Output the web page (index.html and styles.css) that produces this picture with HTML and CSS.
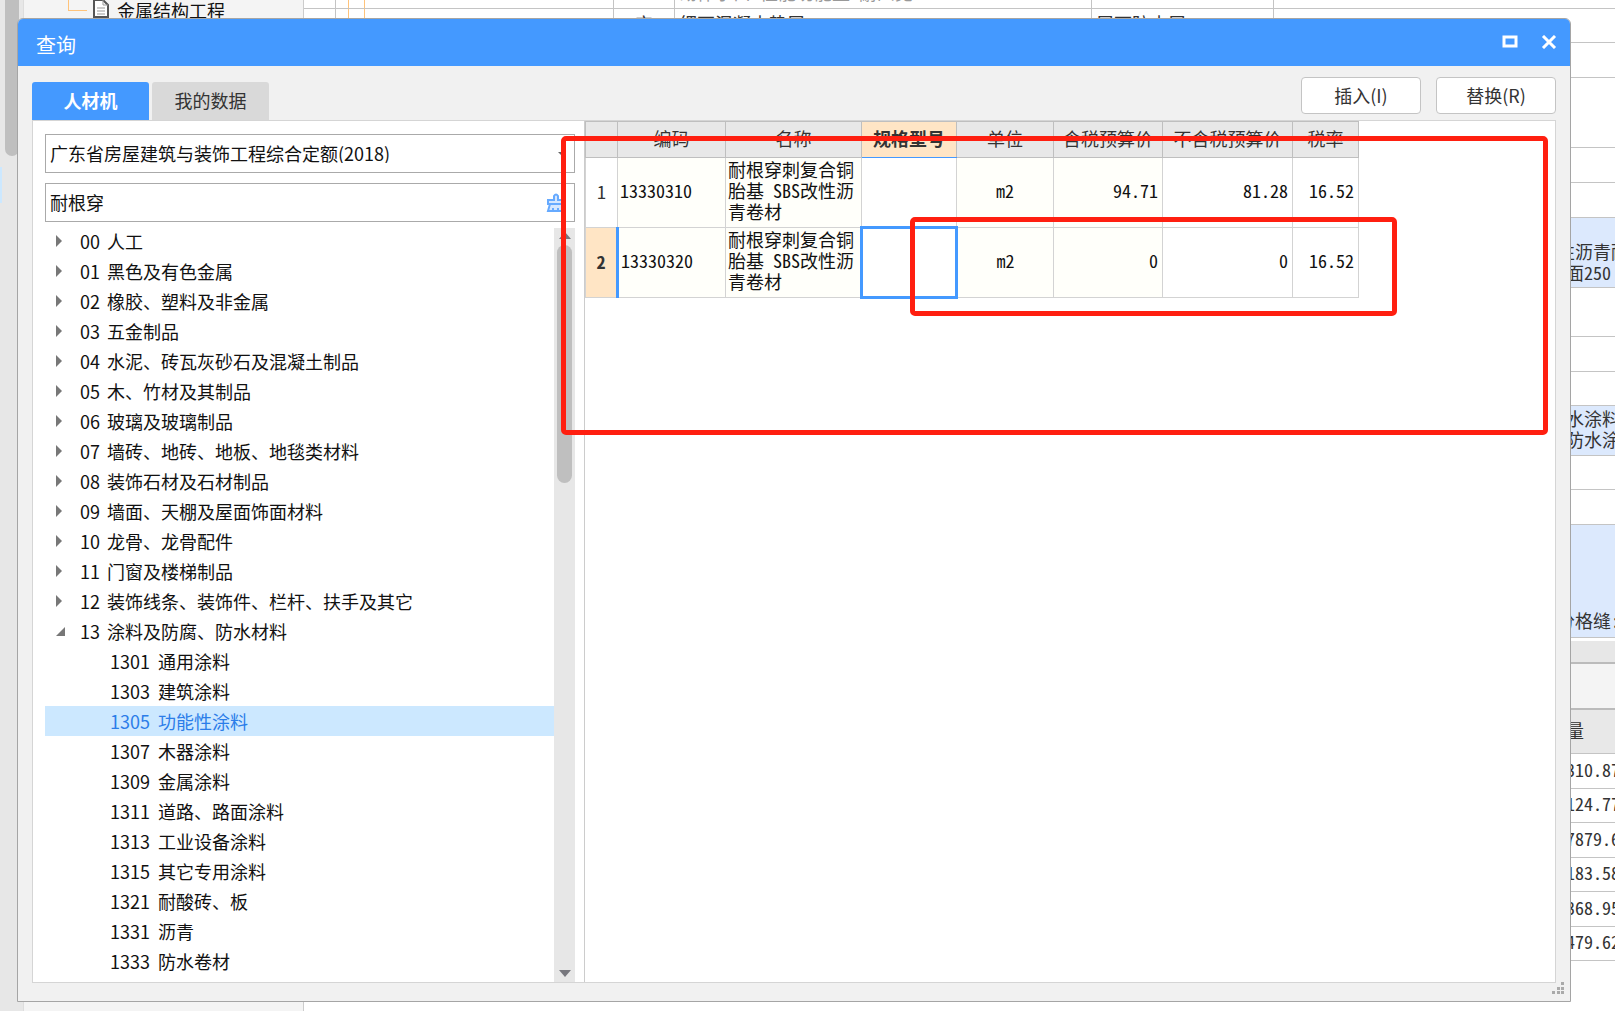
FILE: index.html
```html
<!DOCTYPE html>
<html lang="zh-CN">
<head>
<meta charset="utf-8">
<title>查询</title>
<link rel="stylesheet" href="styles.css">
</head>
<body>
<div class="app">
  <div class="rail"><div class="rail-track"><div class="rail-thumb"></div></div><div class="rail-mark"></div></div>
  <nav class="project">
    <span class="branch"></span>
    <svg class="file-icon" width="16" height="20" viewBox="0 0 16 20"><path d="M1 0V17H15V5L10 0Z" fill="#fff" stroke="#555" stroke-width="2"/><path d="M10 0V5H15M4 8H12M4 11H12M4 14H12" fill="none" stroke="#999"/></svg>
    <span>金属结构工程</span>
  </nav>
  <main class="sheet">
    <div class="row h9 top"><i></i><i class="or"></i><i class="or"></i><i></i><i></i><i class="muted">砌体小口 性能功能型 耐四见.</i><i></i><i class="last"></i></div>
    <div class="row h34 second"><i></i><i class="or"></i><i class="or"></i><i></i><i class="mid">定</i><i>细石混凝土垫层</i><i>屋面防水层</i><i class="last"></i></div>
    <div class="row h35"></div>
    <div class="row h70"></div>
    <div class="row h35"></div>
    <div class="row h35"></div>
    <div class="row h70 picked"><p>S性沥青耐<br>屋面250</p></div>
    <div class="row h49"></div>
    <div class="row h35"></div>
    <div class="row h34"></div>
    <div class="row h50 picked"><p>防水涂料<br>型防水涂</p></div>
    <div class="row h34"></div>
    <div class="row h35"></div>
    <div class="row h113 picked"><p>1分格缝:</p></div>
    <div class="bar"></div>
    <div class="tools"></div>
    <div class="row h44 head"><p>数量</p></div>
    <div class="row h35"><p class="amount">310.87</p></div>
    <div class="row h34"><p class="amount">124.77</p></div>
    <div class="row h35"><p class="amount">7879.62</p></div>
    <div class="row h34"><p class="amount">183.58</p></div>
    <div class="row h35"><p class="amount">368.95</p></div>
    <div class="row h34"><p class="amount">479.62</p></div>
  </main>
</div>

<section class="dialog" role="dialog" aria-labelledby="dialog-title">
  <header class="titlebar">
    <h1 id="dialog-title">查询</h1>
    <button class="win-btn" aria-label="最大化"><svg width="16" height="14" viewBox="0 0 16 14"><rect x="2" y="2" width="12" height="9" fill="none" stroke="#fff" stroke-width="3"/></svg></button>
    <button class="win-btn" aria-label="关闭"><svg width="16" height="14" viewBox="0 0 16 14"><path d="M2 1L14 13M14 1L2 13" stroke="#fff" stroke-width="3"/></svg></button>
  </header>
  <div class="toolbar">
    <div class="tabs">
      <button class="tab active">人材机</button>
      <button class="tab">我的数据</button>
    </div>
    <div class="actions">
      <button class="action">插入(I)</button>
      <button class="action">替换(R)</button>
    </div>
  </div>
  <div class="panel">
    <aside class="side">
      <div class="field">
        <select aria-label="定额库"><option>广东省房屋建筑与装饰工程综合定额(2018)</option></select>
        <svg width="8" height="4" viewBox="0 0 8 4"><path d="M0 0H8L4 4Z" fill="#666"/></svg>
      </div>
      <div class="field">
        <input type="text" value="耐根穿" aria-label="搜索">
        <svg width="20" height="20" viewBox="0 0 20 20" fill="#d5e7ff" stroke="#66aaff" stroke-width="2"><path d="M8 7V3Q10 0 12 3V7H17V11H2V7ZM4 11L2 18H17L16 11M7 18V15M12 18V15"/></svg>
      </div>
      <div class="tree-area">
        <ul class="tree">
          <li><b></b><span>00</span>人工</li>
          <li><b></b><span>01</span>黑色及有色金属</li>
          <li><b></b><span>02</span>橡胶、塑料及非金属</li>
          <li><b></b><span>03</span>五金制品</li>
          <li><b></b><span>04</span>水泥、砖瓦灰砂石及混凝土制品</li>
          <li><b></b><span>05</span>木、竹材及其制品</li>
          <li><b></b><span>06</span>玻璃及玻璃制品</li>
          <li><b></b><span>07</span>墙砖、地砖、地板、地毯类材料</li>
          <li><b></b><span>08</span>装饰石材及石材制品</li>
          <li><b></b><span>09</span>墙面、天棚及屋面饰面材料</li>
          <li><b></b><span>10</span>龙骨、龙骨配件</li>
          <li><b></b><span>11</span>门窗及楼梯制品</li>
          <li><b></b><span>12</span>装饰线条、装饰件、栏杆、扶手及其它</li>
          <li><b class="open"></b><span>13</span>涂料及防腐、防水材料</li>
          <li class="sub"><span>1301</span>通用涂料</li>
          <li class="sub"><span>1303</span>建筑涂料</li>
          <li class="sub selected"><span>1305</span>功能性涂料</li>
          <li class="sub"><span>1307</span>木器涂料</li>
          <li class="sub"><span>1309</span>金属涂料</li>
          <li class="sub"><span>1311</span>道路、路面涂料</li>
          <li class="sub"><span>1313</span>工业设备涂料</li>
          <li class="sub"><span>1315</span>其它专用涂料</li>
          <li class="sub"><span>1321</span>耐酸砖、板</li>
          <li class="sub"><span>1331</span>沥青</li>
          <li class="sub"><span>1333</span>防水卷材</li>
        </ul>
        <div class="scroll">
          <svg width="12" height="7" viewBox="0 0 12 7"><path d="M0 7L6 0L12 7Z" fill="#77777d"/></svg>
          <div class="scroll-thumb"></div>
          <svg width="12" height="7" viewBox="0 0 12 7"><path d="M0 0H12L6 7Z" fill="#77777d"/></svg>
        </div>
      </div>
    </aside>
    <div class="result">
      <table>
        <colgroup><col class="c-no"><col class="c-code"><col class="c-name"><col class="c-spec"><col class="c-unit"><col class="c-tax"><col class="c-net"><col class="c-rate"></colgroup>
        <thead><tr><th></th><th>编码</th><th>名称</th><th class="current">规格型号</th><th>单位</th><th>含税预算价</th><th>不含税预算价</th><th>税率</th></tr></thead>
        <tbody>
          <tr><th>1</th><td class="tint">13330310</td><td class="tint">耐根穿刺复合铜胎基 SBS改性沥青卷材</td><td></td><td class="tint unit">m2</td><td class="tint num">94.71</td><td class="num">81.28</td><td class="num">16.52</td></tr>
          <tr><th class="current">2</th><td class="tint">13330320</td><td class="tint">耐根穿刺复合铜胎基 SBS改性沥青卷材</td><td class="focus"></td><td class="tint unit">m2</td><td class="tint num">0</td><td class="num">0</td><td class="num">16.52</td></tr>
        </tbody>
      </table>
    </div>
  </div>
  <svg class="grip" width="13" height="13" viewBox="0 0 13 13" fill="#aaa"><path d="M9 0h3v3h-3zM5 5h3v3h-3zM9 5h3v3h-3zM0 9h3v3h-3zM5 9h3v3h-3zM9 9h3v3h-3z"/></svg>
</section>
<div class="callout outer"></div>
<div class="callout inner"></div>
</body>
</html>
```

FILE: styles.css
```css
* { box-sizing: border-box; }
body {
  margin: 0;
  height: 100vh;
  overflow: hidden;
  position: relative;
  background: #fff;
  color: #111;
  font: 18px/20px "Noto Sans CJK SC", sans-serif;
}
button, input, select { font: inherit; color: inherit; }

/* application behind the dialog */
.app { display: flex; height: 100%; }
.rail { width: 24px; flex: none; background: #e7e7e7; border-right: 1px solid #ddd; }
.rail-track { padding-left: 5px; }
.rail-thumb { width: 14px; height: 156px; background: #bfbfbf; border-radius: 0 0 7px 7px; }
.rail-mark { width: 2px; height: 36px; margin-top: 11px; background: #cce8ff; }
.project {
  width: 280px;
  flex: none;
  display: flex;
  align-items: flex-start;
  background: #f4f4f4;
  border-right: 1px solid #ccc;
  padding-left: 44px;
}
.branch { width: 19px; height: 11px; margin-right: 6px; border-bottom: 1px solid #ffc37a; border-left: 1px solid #ffc37a; }
.file-icon { margin-right: 8px; }
.sheet { flex: 1; min-width: 0; font-family: "Noto Sans Mono CJK SC", "Noto Sans CJK SC", monospace; color: #333; }
.row {
  display: grid;
  grid-template-columns: 32px 13px 16px 249px 61px 417px 182px 1fr;
  border-bottom: 1px solid #c4c4c4;
  overflow: hidden;
}
.row i { font-style: normal; border-right: 1px solid #c4c4c4; padding-left: 4px; white-space: nowrap; }
.row i.or { border-color: #ffc37a; }
.row i.last { border: 0; }
.row .mid { text-align: center; padding-left: 0; }
.row p { grid-column: 1 / -1; justify-self: end; align-self: center; width: 67px; margin: 0; padding-bottom: 2px; line-height: 21px; white-space: nowrap; }
.row p.amount { width: 49px; padding-bottom: 4px; }
.row.picked { background: #dce9fd; }
.top .muted { height: 26px; margin-top: -18px; color: #999; }
.second i { padding-top: 4px; }
.h9 { height: 9px; }
.h34 { height: 34px; }
.h35 { height: 35px; }
.h44 { height: 44px; }
.h49 { height: 49px; }
.h50 { height: 50px; }
.h70 { height: 70px; }
.h113 { height: 113px; }
.row.h70 p { align-self: end; padding-bottom: 4px; }
.row.h50 p { padding-bottom: 4px; }
.row.h113 p { align-self: end; padding-bottom: 6px; }
.row.head { background: #e8e8e8; }
.bar { height: 23px; margin-top: 3px; background: #e7e7e7; border-bottom: 2px solid #bbb; }
.tools { height: 46px; background: #f4f4f4; border-bottom: 2px solid #bbb; }

/* query dialog */
.dialog {
  position: absolute;
  inset: 18px 44px 9px 17px;
  display: flex;
  flex-direction: column;
  padding-bottom: 18px;
  background: #f1f1f1;
  border: 1px solid #a5a5a5;
  border-radius: 6px 6px 0 0;
}
.titlebar {
  height: 47px;
  flex: none;
  display: flex;
  align-items: center;
  gap: 12px;
  padding: 5px 8px 0 18px;
  background: #4499ff;
  border-radius: 5px 5px 0 0;
  color: #fff;
}
.titlebar h1 { flex: 1; margin: 0; font-size: 20px; font-weight: 400; line-height: 24px; }
.win-btn { width: 27px; height: 24px; padding: 0; border: 0; background: none; line-height: 0; margin-bottom: 6px; }
.toolbar { height: 54px; flex: none; display: flex; justify-content: space-between; padding: 0 14px; }
.tabs { display: flex; align-items: flex-end; gap: 3px; }
.tab { width: 117px; height: 38px; padding: 0 0 2px; border: 0; border-radius: 3px 3px 0 0; background: #d9d9d9; color: #333; }
.tab.active { background: #4499ff; color: #fff; font-weight: 700; }
.actions { display: flex; gap: 15px; padding-top: 11px; }
.action { width: 120px; height: 37px; padding: 0 0 2px; background: #fff; border: 1px solid #c4c4c4; border-radius: 4px; color: #333; }
.panel { flex: 1; min-height: 0; display: flex; margin: 0 14px; background: #fff; border: 1px solid #d5d5d5; }
.side { width: 552px; flex: none; display: flex; flex-direction: column; padding: 13px 9px 0 12px; border-right: 1px solid #ccc; }
.field { display: flex; align-items: center; height: 39px; flex: none; margin-bottom: 10px; padding-right: 8px; border: 1px solid #aaa; background: #fff; }
.field + .field { margin-bottom: 4px; }
.field select, .field input { flex: 1; min-width: 0; height: 100%; border: 0; padding: 0 4px 2px; background: none; appearance: none; outline: 0; }
.tree-area { flex: 1; min-height: 0; display: flex; }
.tree { flex: 1; margin: 0; padding: 0; list-style: none; overflow: hidden; }
.tree li { display: flex; align-items: center; height: 30px; padding-left: 11px; white-space: nowrap; }
.tree span { margin-right: 7px; }
.tree b { width: 24px; height: 12px; display: flex; align-items: center; }
.tree b::before { content: ""; border-left: 6px solid #777; border-top: 6px solid transparent; border-bottom: 6px solid transparent; }
.tree b.open::before { border-left: 9px solid transparent; border-top: 0; border-bottom: 9px solid #777; }
.tree .sub { padding-left: 65px; }
.tree .sub span { margin-right: 8px; }
.tree .selected { background: #cce8ff; color: #2b7de9; }
.scroll { width: 21px; display: flex; flex-direction: column; align-items: center; margin-top: 2px; padding: 4px 0 5px; background: #e7e7e7; }
.scroll-thumb { width: 15px; height: 32%; margin: 6px 0 auto; border-radius: 8px; background: #bfbfbf; }
.result { flex: 1; min-width: 0; }
table { border-collapse: collapse; table-layout: fixed; width: 773px; font-family: "Noto Sans Mono CJK SC", "Noto Sans CJK SC", monospace; line-height: 21px; }
.c-no { width: 32px; }
.c-code { width: 108px; }
.c-name { width: 136px; }
.c-spec { width: 95px; }
.c-unit { width: 97px; }
.c-tax { width: 109px; }
.c-net { width: 130px; }
.c-rate { width: 66px; }
th { padding: 0 0 2px; font-weight: 400; color: #333; }
thead th { height: 36px; background: #e8e8e8; border: 1px solid #bfbfbf; }
thead .current { background: #ffe5c5; font-weight: 700; border-bottom: 1px solid #4499ff; }
td, tbody th { height: 70px; border: 1px solid #d3d3d3; }
td { padding: 0 4px 4px 2px; text-align: left; color: #111; }
tbody .current { background: #ffe5c5; font-weight: 700; border-right: 3px solid #4499ff; }
td.tint { background: #fffffa; }
td.unit { text-align: center; padding-left: 4px; }
td.num { text-align: right; }
td.tint:nth-child(3) { padding-right: 2px; }
td.focus { border: 3px solid #4499ff; }
.grip { position: absolute; right: 5px; bottom: 6px; }

/* red markup over the window */
.callout { position: absolute; border: 5px solid #ff1f10; border-radius: 5px; }
.outer { left: 561px; top: 136px; width: 987px; height: 299px; }
.inner { left: 910px; top: 217px; width: 487px; height: 99px; }
```
